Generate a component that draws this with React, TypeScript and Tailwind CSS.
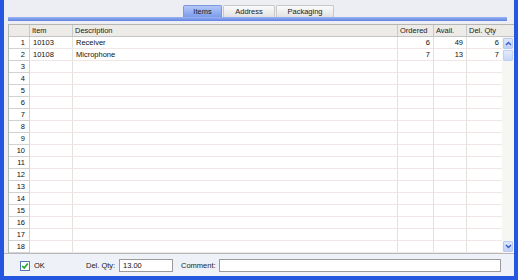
import React from 'react'

const rows = [
  { item: '10103', desc: 'Receiver', ordered: '6', avail: '49', del: '6' },
  { item: '10108', desc: 'Microphone', ordered: '7', avail: '13', del: '7' },
]

function Tab({ label, active, w }: { label: string; active?: boolean; w: string }) {
  return (
    <div
      className={`${w} h-[12px] flex items-center justify-center rounded-t-[2px] border border-b-0 ${
        active
          ? 'bg-gradient-to-b from-[#b4c8f8] to-[#7c9cec] border-[#7d98e0] text-[#1a1a1a]'
          : 'bg-gradient-to-b from-[#fbfbfb] to-[#e2e2e2] border-[#c8c8c8] text-[#222]'
      }`}
    >
      {label}
    </div>
  )
}

function Chevron({ up }: { up?: boolean }) {
  return (
    <svg width="7" height="5" viewBox="0 0 7 5">
      <path d={up ? 'M1 4 L3.5 1.5 L6 4' : 'M1 1 L3.5 3.5 L6 1'} fill="none" stroke="#3a5cc8" strokeWidth="1.4" />
    </svg>
  )
}

export default function App() {
  const all = Array.from({ length: 18 }, (_, i) => rows[i])
  return (
    <div
      className="w-[518px] h-[280px] bg-[#2456df] flex flex-col text-[7.5px] text-[#111]"
      style={{ fontFamily: '"Liberation Sans", Arial, sans-serif' }}
    >
      <div className="mx-[4px] mb-[4px] flex-1 bg-[#eceef3] flex flex-col pl-[4px]">
        {/* tabs */}
        <div className="h-[17px] flex items-end pl-[175px] pt-[5px]">
          <Tab label="Items" active w="w-[39px]" />
          <div className="w-[1px]" />
          <Tab label="Address" w="w-[52px]" />
          <div className="w-[1px]" />
          <Tab label="Packaging" w="w-[58px]" />
        </div>
        <div className="h-[4px] w-[499px] bg-gradient-to-b from-[#9cb2f2] to-[#5f82e2]" />
        <div className="h-[3px]" />

        {/* grid */}
        <div className="flex flex-col border-l border-t border-[#b5b5b5]">
          <div className="h-[12px] flex bg-[#ecebe7] border-b border-[#c4c4c4] text-[#222]">
            <div className="w-[21px] border-r border-[#c9c9c9]" />
            <div className="w-[43px] border-r border-[#c9c9c9] pl-[2px] flex items-center">Item</div>
            <div className="w-[325px] border-r border-[#c9c9c9] pl-[2px] flex items-center">Description</div>
            <div className="w-[36px] border-r border-[#c9c9c9] pl-[2px] flex items-center">Ordered</div>
            <div className="w-[33px] border-r border-[#c9c9c9] pl-[2px] flex items-center">Avail.</div>
            <div className="w-[35px] pl-[2px] flex items-center">Del. Qty</div>
            <div className="w-[12px]" />
          </div>
          <div className="flex">
            <div className="flex flex-col">
              {all.map((r, i) => (
                <div key={i} className="h-[12px] flex bg-white">
                  <div className="w-[21px] border-r border-b border-[#d2d2d2] flex items-center justify-end pr-[4px]">
                    {i + 1}
                  </div>
                  <div className="w-[43px] border-r border-b border-r-[#e4e2df] border-b-[#f1e6e6] pl-[3px] flex items-center">
                    {r?.item}
                  </div>
                  <div className="w-[325px] border-r border-b border-r-[#e4e2df] border-b-[#f1e6e6] pl-[3px] flex items-center">
                    {r?.desc}
                  </div>
                  <div className="w-[36px] border-r border-b border-r-[#e4e2df] border-b-[#f1e6e6] pr-[3px] flex items-center justify-end">
                    {r?.ordered}
                  </div>
                  <div className="w-[33px] border-r border-b border-r-[#e4e2df] border-b-[#f1e6e6] pr-[3px] flex items-center justify-end">
                    {r?.avail}
                  </div>
                  <div className="w-[35px] border-b border-b-[#f1e6e6] pr-[3px] flex items-center justify-end">
                    {r?.del}
                  </div>
                </div>
              ))}
            </div>
            <div className="w-[12px] bg-[#f6f6f2] flex flex-col justify-between p-[1px]">
              <div className="flex flex-col gap-[1px]">
                <div className="h-[11px] bg-gradient-to-b from-[#dde6fb] to-[#c0d0f5] border border-[#b9c9ef] rounded-[1px] flex items-center justify-center">
                  <Chevron up />
                </div>
                <div className="h-[11px] bg-gradient-to-b from-[#e2eafc] to-[#c8d6f7] border border-[#c0cff2] rounded-[1px]" />
              </div>
              <div className="h-[11px] bg-gradient-to-b from-[#dde6fb] to-[#c0d0f5] border border-[#b9c9ef] rounded-[1px] flex items-center justify-center">
                <Chevron />
              </div>
            </div>
          </div>
        </div>

        {/* footer */}
        <div className="flex-1 border-t border-[#b8b8b8] bg-[#eef1f7] flex items-center -ml-[4px] pl-[16px] pt-[1px] whitespace-nowrap">
          <div className="shrink-0 w-[10px] h-[10px] bg-white border border-[#5477b8] flex items-center justify-center">
            <svg width="8" height="8" viewBox="0 0 8 8">
              <path d="M1.2 4 L3.2 6 L6.8 1.6" fill="none" stroke="#21a121" strokeWidth="1.6" />
            </svg>
          </div>
          <span className="shrink-0 ml-[4px] w-[52px]">OK</span>
          <span className="shrink-0 w-[33px] text-[#222]">Del. Qty:</span>
          <div className="shrink-0 w-[54px] h-[13px] bg-white border border-[#9a9a9a] flex items-center pl-[3px]">13.00</div>
          <span className="shrink-0 ml-[8px] w-[38px] text-[#222]">Comment:</span>
          <div className="shrink-0 w-[282px] h-[13px] bg-white border border-[#9a9a9a]" />
        </div>
      </div>
    </div>
  )
}
